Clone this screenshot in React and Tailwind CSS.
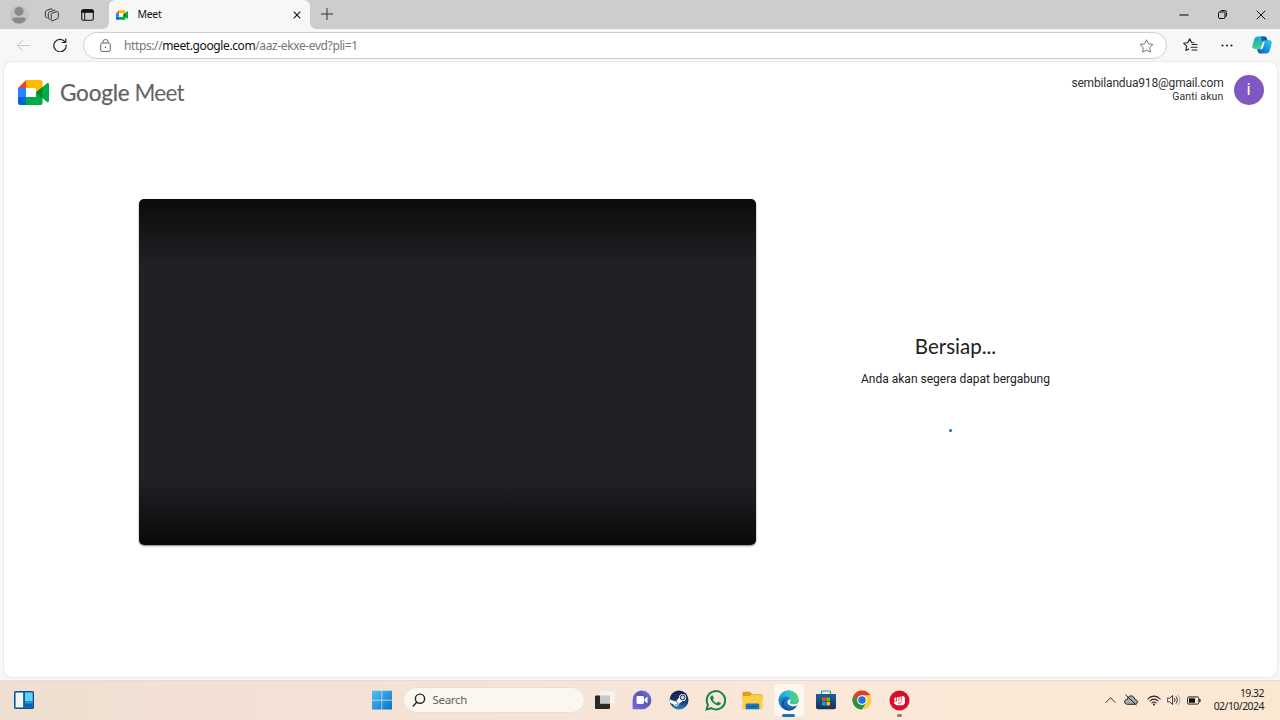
import React from "react";

const segoe = "font-['Noto_Sans','Open_Sans',sans-serif]";
const roboto = "font-[Roboto,sans-serif]";

function MeetLogo({ className }) {
  return (
    <svg className={className} viewBox="0 0 31 25">
      <path d="M0 8h8v9H0z" fill="#2684fc" />
      <path d="M8 0v8H0z" fill="#ea4335" />
      <path d="M8 0h14.500a2 2 0 0 1 2 2v6.500L18 13V8H8z" fill="#ffba00" />
      <path d="M0 17h8v8H2a2 2 0 0 1-2-2z" fill="#0066da" />
      <path d="M8 17h10v-5l6.500 4V23a2 2 0 0 1-2 2H8z" fill="#00ac47" />
      <path d="M18 12.500 29 3.300c.8-.7 2-.2 2 .8v17c0 1-1.200 1.400-2 .8z" fill="#00ac47" />
      <path d="m18 12.500 6.500-5.500v11z" fill="#00832d" />
      <path d="M8 8h10v9H8z" fill="#fff" />
    </svg>
  );
}

function ProfileIcon() {
  return (
    <svg className="h-[20px] w-[20px]" viewBox="0 0 20 20">
      <circle cx="10" cy="10" r="9.500" fill="#c4c1be" />
      <circle cx="10" cy="6.400" r="4.500" fill="#8c8987" />
      <path d="M3.200 14.800c0-1.500 1-2.300 2.300-2.300h9c1.300 0 2.300.8 2.300 2.300-1.300 2.300-3.700 3.700-6.800 3.700s-5.500-1.400-6.800-3.700z" fill="#8c8987" />
    </svg>
  );
}

function WorkspacesIcon() {
  return (
    <svg className="h-4 w-4" viewBox="0 0 16 16" fill="none" stroke="#303030" strokeWidth=".95" strokeLinejoin="round" strokeLinecap="round">
      <path d="M7.200 7.200c0-.5.300-.8.800-1l5.200-1.600c.6-.2 1.100.2 1.100.8v5.100c0 .5-.3.900-.8 1.100L8.200 14c-.6.200-1-.2-1-.8z" />
      <path d="M5.800 12.300c-.9.200-1.500-.2-1.500-1V6.200c0-.6.300-.9.800-1.100L10 3.300c.7-.2 1.200 0 1.300.6" />
      <path d="M2.900 10.500c-.9.200-1.500-.2-1.500-1V4.700c0-.6.300-.9.800-1.100L7 1.800c.7-.2 1.200 0 1.300.6" />
    </svg>
  );
}

function TabActionsIcon() {
  return (
    <svg className="h-[12px] w-[13px]" viewBox="0 0 13 12">
      <rect x=".7" y=".7" width="11.600" height="10.600" rx="1.500" fill="none" stroke="#151515" strokeWidth="1.100" />
      <path d="M.7 2.200A1.500 1.500 0 0 1 2.200.7h8.600a1.500 1.500 0 0 1 1.500 1.500v1.300H.7z" fill="#111" stroke="#111" strokeWidth=".6" />
      <path d="M3.700 3.500V11" stroke="#151515" strokeWidth="1" />
    </svg>
  );
}

function TabShape() {
  return (
    <svg className="absolute inset-0 h-[29px] w-[217px]" viewBox="0 0 217 29">
      <path d="M0 29c5.500 0 8-2 8-8V7c0-4.500 2.500-7 7-7h187c4.500 0 7 2.500 7 7v14c0 6 2.500 8 8 8z" fill="#f7f7f7" />
    </svg>
  );
}

function TitleBar() {
  return (
    <div className="flex h-[29px] w-full items-center bg-[#cdcdcd]">
      <div className="flex w-[101px] items-center pl-[9px]">
        <ProfileIcon />
        <div className="ml-[15px]"><WorkspacesIcon /></div>
        <div className="ml-[20.500px]"><TabActionsIcon /></div>
      </div>
      <div className="relative h-[29px] w-[217px]">
        <TabShape />
        <div className="relative flex h-[29px] items-center pl-[15px]">
          <MeetLogo className="h-[10px] w-[12px]" />
          <span className={"ml-[9.500px] -mt-[1.500px] text-[10.5px] leading-4 tracking-[-0.300px] text-[#111] " + segoe}>Meet</span>
          <svg className="mr-[17px] ml-auto h-[8px] w-[8px]" viewBox="0 0 8 8" stroke="#111" strokeWidth="1.100">
            <path d="m.7.700 6.600 6.600M7.300.7.700 7.300" />
          </svg>
        </div>
      </div>
      <svg className="-mt-px ml-[3px] h-[12px] w-[12px]" viewBox="0 0 12 12" stroke="#333" strokeWidth="1">
        <path d="M0 6h12M6 0v12" />
      </svg>
      <div className="ml-auto flex items-center pr-[14px]">
        <svg className="h-[10px] w-[10px]" viewBox="0 0 10 10" stroke="#000" strokeWidth="1"><path d="M.5 5h9" /></svg>
        <svg className="ml-[29px] h-[9px] w-[9px]" viewBox="0 0 9 9" fill="none" stroke="#000" strokeWidth="1">
          <rect x=".5" y="2" width="6.500" height="6.500" rx="1.300" />
          <path d="M2.500 1.500q0-1 1-1H6.500q2 0 2 2V5.500q0 1-1 1" />
        </svg>
        <svg className="ml-[29px] h-[10px] w-[10px]" viewBox="0 0 10 10" stroke="#111" strokeWidth="1"><path d="m.7.700 8.600 8.600M9.300.700.700 9.300" /></svg>
      </div>
    </div>
  );
}

function CopilotIcon() {
  return (
    <svg className="h-[20px] w-[20px]" viewBox="0 0 20 20">
      <defs>
        <linearGradient id="cpA" x1="0" y1="0" x2="0.3" y2="1">
          <stop offset="0" stopColor="#16a5e8" /><stop offset=".5" stopColor="#22b9b4" /><stop offset="1" stopColor="#4fd468" />
        </linearGradient>
        <linearGradient id="cpB" x1="1" y1="0" x2="0" y2="1">
          <stop offset="0" stopColor="#45cdf2" /><stop offset=".5" stopColor="#1796e6" /><stop offset="1" stopColor="#1645c5" />
        </linearGradient>
      </defs>
      <path d="M14 18.500H8.300c-1.500 0-2.200-.8-2.600-2l-.8-3h2.400c1.500 0 2.200-.8 2.600-2.200L11.300 7c.4-1.500 1-2 2.400-2h3c2.200 0 3.600 1.500 3 3.500l-2 7.300c-.5 1.700-1.500 2.700-3.700 2.700z" fill="url(#cpB)" />
      <path d="M6 1.500h6.300c1.500 0 2.200.8 2.600 2l.5 1.700h-2c-1.500 0-2.200.8-2.600 2.300L9.400 12c-.4 1.300-1 2-2.400 2H3.300C1.100 14-.2 12.600.3 10.700L2.300 4.200C2.800 2.500 3.900 1.500 6 1.500z" fill="url(#cpA)" />
      <path d="M9 1.500h3.300c1.500 0 2.200.8 2.600 2l.5 1.700h-2c-1.500 0-2.200.8-2.600 2.300C10 6 9.500 4 9 1.500z" fill="#155bb5" />
      <path d="M11.300 6.800h1.500l-2 6.200c-.4 1-.9 1.300-1.800 1.300H7.500c1-.3 1.500-.9 1.900-2.100z" fill="#fff" />
    </svg>
  );
}

function Toolbar() {
  return (
    <div className="flex h-[33px] w-full items-center bg-[#f7f7f7]">
      <svg className="ml-[17px] h-[12px] w-[13px]" viewBox="0 0 13 12" fill="none" stroke="#c6c6c6" strokeWidth="1">
        <path d="M13 5.500H.8M6 .2.700 5.500 6 10.800" />
      </svg>
      <svg className="ml-[23px] -mt-px h-[14px] w-[14px]" viewBox="0 0 14 14" fill="none" stroke="#222" strokeWidth="1.200" strokeLinecap="round" strokeLinejoin="round">
        <path d="M12.300 4.300A6.200 6.200 0 1 0 13.200 7M12.800.8v3.700H9.200" />
      </svg>
      <div className="ml-[16px] flex h-[27px] w-[1084px] items-center rounded-full border border-[#cfcfcf] bg-white">
        <svg className="ml-[15.500px] h-[13px] w-[11px]" viewBox="0 0 11 13" fill="none" stroke="#666" strokeWidth="1">
          <rect x=".7" y="4" width="9.600" height="8.400" rx="1.500" />
          <path d="M3 4V2.700a2.500 2.200 0 0 1 5 0V4" />
          <circle cx="5.500" cy="8.200" r=".7" fill="#333" stroke="none" />
        </svg>
        <span className={"ml-[13.500px] text-[12px] leading-4 tracking-[-0.390px] whitespace-nowrap text-[#767676] " + segoe}>
          https://<span className="text-[#111]">meet.google.com</span>/aaz-ekxe-evd?pli=1
        </span>
        <svg className="mr-[12px] ml-auto h-[14px] w-[15px]" viewBox="0 0 15 14" fill="none" stroke="#777" strokeWidth="1" strokeLinejoin="round">
          <path d="m7.500.8 2 4.100 4.500.6-3.300 3.100.8 4.500-4-2.100-4 2.100.8-4.500L1 5.500l4.500-.6z" />
        </svg>
      </div>
      <svg className="ml-[16px] -mt-px h-[14px] w-[15px]" viewBox="0 0 15 14" fill="none" stroke="#222" strokeWidth="1.100" strokeLinejoin="round" strokeLinecap="round">
        <path d="M11 4.700 8.600 4.500 6.700.8 4.800 4.700.700 5.300l3 2.900-.8 4.300 3-1.600M9 6.500h5M8 9.200h6M9 12h5" />
      </svg>
      <svg className="ml-[23px] -mt-px h-[3px] w-[12px]" viewBox="0 0 12 3" fill="#111">
        <circle cx="1.500" cy="1.500" r="1" /><circle cx="6" cy="1.500" r="1" /><circle cx="10.500" cy="1.500" r="1" />
      </svg>
      <div className="ml-[19px] -mt-px"><CopilotIcon /></div>
    </div>
  );
}

function MeetPage() {
  return (
    <div className="flex h-[618px] w-full bg-[#f7f7f7] pr-[3px] pb-[3px] pl-[4px]">
      <div className="flex h-[615px] flex-1 flex-col rounded-[8px] bg-white shadow-[0_0_2px_rgba(0,0,0,0.18)]">
        <header className="flex h-[60px] items-start justify-between pr-[13.500px] pl-[14px]">
          <div className="flex items-center pt-[17px]">
            <MeetLogo className="-mt-[1px] h-[25px] w-[31px]" />
            <div className="ml-[11px] flex font-[Lato,sans-serif] text-[22.500px] leading-[28px] whitespace-nowrap text-[#5f6368]">
              <span className="tracking-[-0.200px] [-webkit-text-stroke:0.250px_#5f6368]">Google</span>
              <span className="ml-[5px] tracking-[-0.750px]">Meet</span>
            </div>
          </div>
          <div className="flex items-start pt-[13px]">
            <div className={"pt-[1px] text-right text-[#303134] " + roboto}>
              <div className="text-[12px] leading-[14px] tracking-[-0.170px]">sembilandua918@gmail.com</div>
              <div className="text-[10.5px] leading-[13px] tracking-[0.150px]">Ganti akun</div>
            </div>
            <div className={"ml-[10px] flex h-[30px] w-[30px] items-center justify-center rounded-full bg-[#7e57c2] text-[17px] text-white " + roboto}>i</div>
          </div>
        </header>
        <main className="flex pt-[77px] pl-[135px]">
          <div className="h-[346px] w-[616.500px] rounded-[5px] bg-[linear-gradient(to_bottom,#0a0b0c_0,#202124_66px,#202124_280px,#08090a_346px)] shadow-[0_1px_2px_rgba(0,0,0,0.5)]" />
          <section className="flex w-[400px] flex-col items-center pt-[134px] text-[#202124]">
            <h1 className="font-[Lato,sans-serif] text-[20.500px] leading-[26px] whitespace-nowrap">Bersiap...</h1>
            <p className={"mt-[13px] text-[12px] leading-[14px] whitespace-nowrap " + roboto}>Anda akan segera dapat bergabung</p>
            <div className="mt-[43px] mr-[10.500px] h-[3px] w-[3px] rounded-full bg-[#1a63cc]" />
          </section>
        </main>
      </div>
    </div>
  );
}

function TaskCell({ children, active }) {
  return (
    <div className={"flex h-[32px] w-[30px] shrink-0 items-center justify-center rounded-[4px] " + (active ? "bg-[#fdf7f2]" : "")}>
      {children}
    </div>
  );
}

function WindowsIcon() {
  return (
    <svg className="h-[20px] w-[20px]" viewBox="0 0 20 20">
      <defs>
        <linearGradient id="win" x1="0" y1="0" x2="20" y2="20" gradientUnits="userSpaceOnUse">
          <stop stopColor="#4cc6f5" /><stop offset="1" stopColor="#0870c5" />
        </linearGradient>
      </defs>
      <path d="M0 .7h9.500v9H0zM10.200.7H20v9h-9.800zM0 10.400h9.500v9H0zM10.200 10.400H20v9h-9.800z" fill="url(#win)" />
    </svg>
  );
}

function ChatIcon() {
  return (
    <svg className="h-[20px] w-[20px]" viewBox="0 0 20 20">
      <defs>
        <linearGradient id="chat" x1="0" y1="1" x2="1" y2="0"><stop stopColor="#7a69e0" /><stop offset=".6" stopColor="#5557b7" /><stop offset="1" stopColor="#7c83e5" /></linearGradient>
      </defs>
      <path d="M10 .5a9.300 9.300 0 1 1 0 18.800H1.800c-.8 0-1.300-.5-1.200-1.300V10A9.300 9.300 0 0 1 10 .5z" fill="url(#chat)" />
      <rect x="4.500" y="6" width="7.500" height="8" rx="1.400" fill="#fff" />
      <path d="m12.500 9 3-2.500v7l-3-2.500z" fill="#fff" />
    </svg>
  );
}

function SteamIcon() {
  return (
    <svg className="h-[20px] w-[20px]" viewBox="0 0 20 20">
      <defs>
        <linearGradient id="steam" x1="0" y1="0" x2="0" y2="1"><stop stopColor="#11204d" /><stop offset=".6" stopColor="#153b71" /><stop offset="1" stopColor="#268ac6" /></linearGradient>
        <clipPath id="steamClip"><circle cx="10" cy="10" r="9.500" /></clipPath>
      </defs>
      <circle cx="10" cy="10" r="9.500" fill="url(#steam)" />
      <g clipPath="url(#steamClip)">
        <path d="m0 9 5.500 2.300c.8-.4 1.500-.5 2-.4L10 7.500a3.600 3.600 0 1 1 3.700 3.600L10 13.800a2.800 2.800 0 0 1-5.500.5L0 12.500z" fill="#fff" />
        <circle cx="13.600" cy="7.500" r="2.400" fill="#c5cad8" stroke="#1b3568" strokeWidth="1" />
        <path d="M6 14.700a1.800 1.800 0 1 0 .4-3" fill="none" stroke="#254574" strokeWidth=".8" />
      </g>
    </svg>
  );
}

function WhatsAppIcon() {
  return (
    <svg className="h-[21px] w-[21px]" viewBox="0 0 24 24" fill="#178548">
      <path d="M17.472 14.382c-.297-.149-1.758-.867-2.030-.967-.273-.099-.471-.148-.670.150-.197.297-.767.966-.940 1.164-.173.199-.347.223-.644.075-.297-.150-1.255-.463-2.390-1.475-.883-.788-1.480-1.761-1.653-2.059-.173-.297-.018-.458.130-.606.134-.133.298-.347.446-.520.149-.174.198-.298.298-.497.099-.198.050-.371-.025-.520-.075-.149-.669-1.612-.916-2.207-.242-.579-.487-.500-.669-.510-.173-.008-.371-.010-.570-.010-.198 0-.520.074-.792.372-.272.297-1.040 1.016-1.040 2.479 0 1.462 1.065 2.875 1.213 3.074.149.198 2.096 3.200 5.077 4.487.709.306 1.262.489 1.694.625.712.227 1.360.195 1.871.118.571-.085 1.758-.719 2.006-1.413.248-.694.248-1.289.173-1.413-.074-.124-.272-.198-.570-.347z" />
      <path fill="none" stroke="#178548" strokeWidth="2.300" d="m1.800 22.200 1.500-5.400A10.500 10.500 0 1 1 7.200 20.800z" />
    </svg>
  );
}

function FolderIcon() {
  return (
    <svg className="h-[19px] w-[21px]" viewBox="0 0 21 19">
      <path d="M.5 2c0-.8.500-1.300 1.300-1.300h6L10 3H19c1 0 1.500.600 1.500 1.500V9H.5z" fill="#dba018" />
      <path d="M.5 5h7l2.500-1.500h9.200c.8 0 1.300.5 1.300 1.300V17c0 .8-.5 1.300-1.300 1.300H1.800C1 18.300.5 17.800.5 17z" fill="#fbce45" />
      <path d="M3.700 18.300V14c0-1 .6-1.500 1.500-1.500h10.600c1 0 1.500.6 1.500 1.500v4.300z" fill="#1975bd" />
      <path d="M6.500 15.700h8" stroke="#1050a0" strokeWidth="1" />
    </svg>
  );
}

function EdgeIcon() {
  return (
    <svg className="h-[21px] w-[21px]" viewBox="0 0 21 21">
      <defs>
        <linearGradient id="eTop" x1="0" y1=".5" x2="1" y2=".4"><stop stopColor="#1f9fe0" /><stop offset=".5" stopColor="#31bfc9" /><stop offset="1" stopColor="#62d55a" /></linearGradient>
        <linearGradient id="eLeft" x1="0" y1="0" x2="1" y2="1"><stop stopColor="#2092dc" /><stop offset="1" stopColor="#0c59a4" /></linearGradient>
      </defs>
      <circle cx="10.500" cy="10.500" r="10" fill="url(#eLeft)" />
      <path d="M.5 10.300C1 4.500 5.200.5 10.700.5c6 0 9.800 4.500 9.800 8.700 0 3.200-2.300 5-5 5-2.300 0-4-.8-3.600-1.700.5-.8.900-1.400.700-2.500C12.200 7.600 9.700 6.500 7.500 6.500 4 6.500 1.300 8 .5 10.300z" fill="url(#eTop)" />
      <path d="M8.500 8.800c-3 1.500-3.300 5.800-.8 8.500 2.700 2.900 7.400 2.500 11-.7-1.900 2.900-5 4.100-8.200 3.900-3.800-.8-6.500-3.500-6.500-7 0-2.500 1.800-4.400 4.500-4.700z" fill="#124e9a" />
      <path d="M12.500 9.800c.3 1.200-.4 1.700-.6 2.500-.4 1.300 1.300 2 3.600 2 2 0 3.600-.6 5-2-.3 1.300-.8 2.200-1.500 3-2 1.300-5.300 1.500-7.300.3-2.200-1.300-2.900-3.900-1.700-5.400.8-.9 2.200-1.200 2.500-.4z" fill="#fdf7f2" />
    </svg>
  );
}

function StoreIcon() {
  return (
    <svg className="h-[20px] w-[20px]" viewBox="0 0 20 20">
      <defs><linearGradient id="store" x1="0" y1="0" x2="0" y2="1"><stop stopColor="#1d6390" /><stop offset="1" stopColor="#152f5c" /></linearGradient></defs>
      <path d="M5.500 4.500V2c0-.7.300-1 1-1h7c.7 0 1 .3 1 1v2.500" fill="none" stroke="#279bd4" strokeWidth="1.200" />
      <path d="M0 4h20v13.200c0 1.200-.8 2-2 2H2c-1.200 0-2-.8-2-2z" fill="url(#store)" />
      <path d="M6 7.500h3.600v3.600H6z" fill="#f25022" /><path d="M10.400 7.500H14v3.600h-3.600z" fill="#7fba00" />
      <path d="M6 11.900h3.600v3.600H6z" fill="#00a4ef" /><path d="M10.400 11.900H14v3.600h-3.600z" fill="#ffb900" />
    </svg>
  );
}

function ChromeIcon() {
  return (
    <svg className="h-[20px] w-[20px]" viewBox="0 0 48 48">
      <circle cx="24" cy="24" r="23" fill="#ffcd40" />
      <path d="M4.080 12.500A23 23 0 0 1 43.920 12.500H24L14.040 29.750z" fill="#e33b2e" />
      <path d="M4.080 12.500A23 23 0 0 0 24 47L33.960 29.750A11.500 11.500 0 0 1 14.040 29.750z" fill="#229342" />
      <circle cx="24" cy="24" r="11.500" fill="#fff" />
      <circle cx="24" cy="24" r="9" fill="#1a73e8" />
    </svg>
  );
}

function FistIcon() {
  return (
    <svg className="h-[21px] w-[21px]" viewBox="0 0 21 21">
      <circle cx="10.500" cy="10.500" r="10" fill="#dc0c26" />
      <path d="M5.500 7.800 14.500 6l1.300 1.500.2 5.500-1.800 2.200H7.500L5 13.300z" fill="#fff" />
      <path d="M7.500 7v4.300M9.900 6.500v4.500M12.300 6v4.800M5 11.500l2.500-.5M9 13.300l2.800-.5 1.200-1.500" fill="none" stroke="#dc0c26" strokeWidth=".7" />
    </svg>
  );
}

function Taskbar() {
  return (
    <div className="flex h-[40px] w-full items-center border-t border-[#e8dcd2] bg-[linear-gradient(to_right,#efdfd1,#f5e3d7_40%,#fae8d9_65%,#fbe8d3)] pb-px">
      <svg className="ml-[14px] h-[18px] w-[20px] shrink-0" viewBox="0 0 20 18">
        <rect x=".6" y=".6" width="18.800" height="16.800" rx="1" fill="#1f91df" stroke="#0d4f8e" strokeWidth="1.200" />
        <path d="M1.700 1.700h7.500v14.600H1.700z" fill="#f4f4f4" />
        <path d="M11 1.700h7.500V10H11z" fill="#62d1f7" /><path d="M11 12.800h7.500v3.500H11z" fill="#0960b4" />
        <path d="M10.100 1v16" stroke="#0d4f8e" strokeWidth="1.300" />
      </svg>
      <div className="ml-[338px] shrink-0"><WindowsIcon /></div>
      <div className="ml-[10.500px] flex h-[26px] w-[182.500px] shrink-0 items-center rounded-full border border-[#eadfd7] bg-[#fcf6f1] pl-[8px]">
        <svg className="h-[14px] w-[14px]" viewBox="0 0 14 14" fill="none" stroke="#222" strokeWidth="1.400" strokeLinecap="round">
          <circle cx="8" cy="5.700" r="4.600" /><path d="m4.700 9.200-3.500 3.700" />
        </svg>
        <span className={"ml-[7px] text-[11.5px] leading-4 tracking-[-0.300px] text-[#626060] " + segoe}>Search</span>
      </div>
      <div className="ml-[5px] flex shrink-0 gap-[6.750px]">
        <TaskCell>
          <svg className="h-[20px] w-[20px]" viewBox="0 0 20 20">
            <rect x="0" y="5.500" width="15" height="13.500" rx="1" fill="#292929" />
            <rect x="5" y="1" width="15" height="12.500" rx="1" fill="#f5f2f0" />
            <path d="M5 5.500h10v8H5z" fill="#c9c9c9" />
          </svg>
        </TaskCell>
        <TaskCell><ChatIcon /></TaskCell>
        <TaskCell><SteamIcon /></TaskCell>
        <TaskCell><WhatsAppIcon /></TaskCell>
        <TaskCell><FolderIcon /></TaskCell>
        <TaskCell active>
          <div className="relative">
            <EdgeIcon />
            <span className="absolute top-[24px] left-[4px] h-[3px] w-[13px] rounded-full bg-[#1777bd]" />
          </div>
        </TaskCell>
        <TaskCell><StoreIcon /></TaskCell>
        <TaskCell><ChromeIcon /></TaskCell>
        <TaskCell>
          <div className="relative">
            <FistIcon />
            <span className="absolute top-[24px] left-[8px] h-[3px] w-[5px] rounded-full bg-[#8c7f77]" />
          </div>
        </TaskCell>
      </div>
      <div className="ml-auto flex shrink-0 items-center pr-[16px]">
        <svg className="h-[8px] w-[11px]" viewBox="0 0 11 8" fill="none" stroke="#333" strokeWidth="1"><path d="m.7 6.700 4.800-5 4.800 5" /></svg>
        <svg className="ml-[8px] h-[12px] w-[14px]" viewBox="0 0 14 12" stroke="#222" strokeWidth="1" fill="#a9abad">
          <path d="M3.500 10.300h7.200c1.700 0 2.700-1 2.700-2.400S12.300 5.700 10.800 5.500C10.500 3.200 9 1.900 7 1.900S3.700 3.200 3.400 5.300C1.700 5.500.6 6.500.6 7.900s1.200 2.400 2.900 2.400z" />
          <path d="m1.500.700 11 10.600" />
        </svg>
        <svg className="ml-[9px] h-[11px] w-[14px]" viewBox="0 0 14 11" fill="none" stroke="#222" strokeWidth="1.100" strokeLinecap="round">
          <path d="M.8 4C4.200.2 9.800.2 13.200 4M2.900 6c2.300-2.500 5.900-2.500 8.200 0M4.900 8c1.200-1.300 3-1.300 4.200 0" />
          <circle cx="7" cy="9.500" r="1" fill="#222" stroke="none" />
        </svg>
        <svg className="ml-[6px] h-[12px] w-[14px]" viewBox="0 0 14 12" fill="none" stroke="#222" strokeWidth=".9" strokeLinecap="round" strokeLinejoin="round">
          <path d="M.6 4.200h2L5.600 1.500v9L2.600 7.800h-2zM7.400 4.200c.9 1 .9 2.600 0 3.600" /><path d="M9.100 2.700c1.700 2 1.700 4.600 0 6.600" /><path d="M10.900 1.200c2.700 3 2.700 6.600 0 9.600" stroke="#999" />
        </svg>
        <svg className="ml-[6px] h-[9px] w-[14px]" viewBox="0 0 14 9">
          <rect x=".6" y=".9" width="11.200" height="7.200" rx="1.300" fill="none" stroke="#222" />
          <path d="M2 2.300h6v4.400H2zM12.300 3h1.200v3h-1.200z" fill="#111" />
        </svg>
        <div className={"ml-[11px] w-[52px] text-right text-[10.5px] leading-[13px] whitespace-nowrap text-[#222] " + segoe}>
          <div className="tracking-[-0.550px]">19.32</div>
          <div className="tracking-[-0.550px]">02/10/2024</div>
        </div>
      </div>
    </div>
  );
}

export default function App() {
  return (
    <div className="flex h-[720px] w-[1280px] flex-col overflow-hidden bg-[#f7f7f7]">
      <TitleBar />
      <Toolbar />
      <MeetPage />
      <Taskbar />
    </div>
  );
}
